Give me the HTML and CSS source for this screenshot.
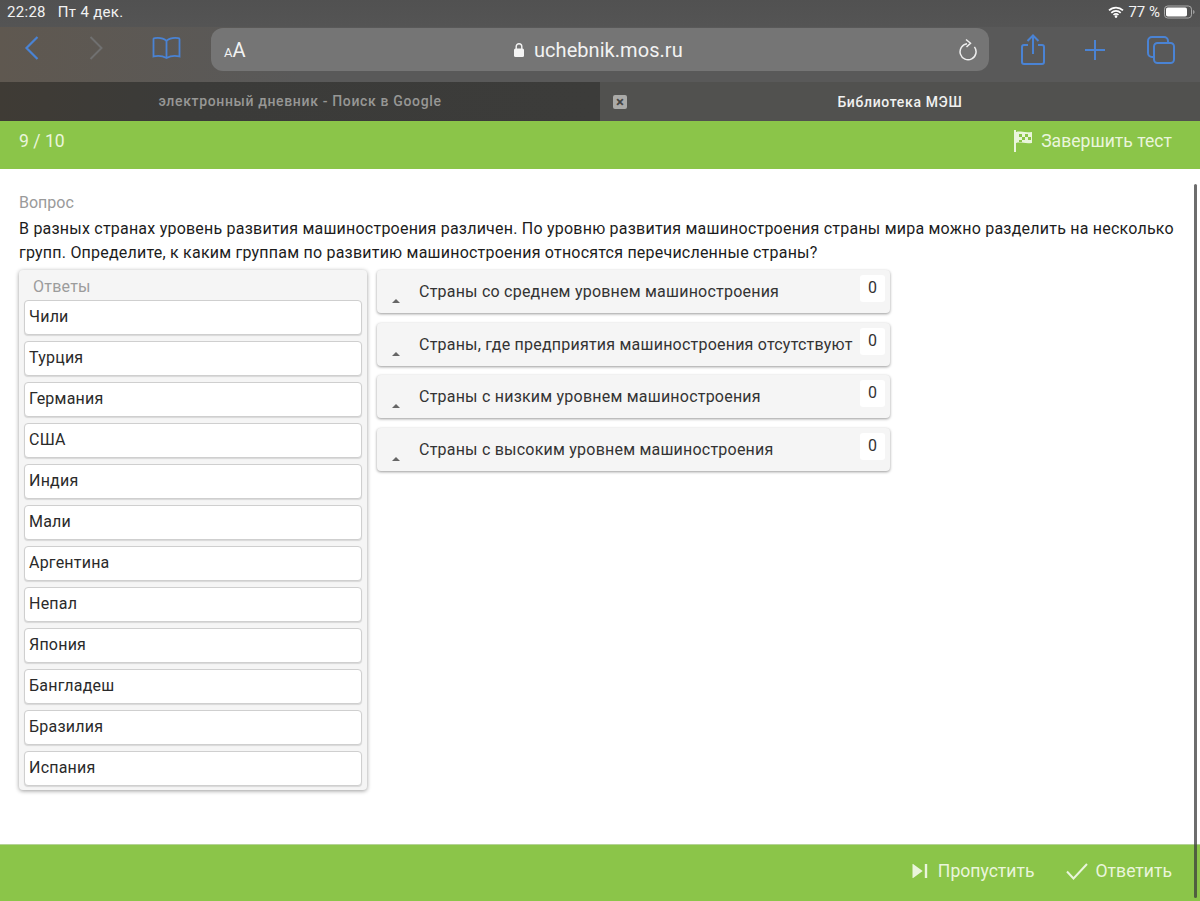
FILE: index.html
```html
<!DOCTYPE html>
<html lang="ru">
<head>
<meta charset="utf-8">
<title>Библиотека МЭШ</title>
<link rel="stylesheet" href="styles.css">
</head>
<body>
<div class="chrome">
  <div class="status">
    <div class="status-left"><span>22:28</span><span>Пт 4 дек.</span></div>
    <div class="status-right">
      <svg class="wifi" width="16" height="12" viewBox="0 0 16 12"><path d="M1 4.400a10 10 0 0 1 14 0M3.300 6.800a6.800 6.800 0 0 1 9.400 0M5.500 9a3.600 3.600 0 0 1 5 0" fill="none" stroke="#fff" stroke-width="1.700"/><circle cx="8" cy="10.600" r="1.300" fill="#fff"/></svg>
      <span>77 %</span>
      <svg width="32" height="14" viewBox="0 0 32 14"><rect x=".5" y="1" width="27" height="12" rx="3.200" fill="none" stroke="#aaa"/><rect x="2" y="2.500" width="21" height="9" rx="1.800" fill="#fff"/><path d="M29 5v4c1-.3 1.600-1 1.600-2S30 5.300 29 5z" fill="#999"/></svg>
    </div>
  </div>
  <div class="toolbar">
    <div class="nav-icons">
      <svg width="16" height="26" viewBox="0 0 16 26"><path d="M13.500 2 2.500 13l11 11" fill="none" stroke="#4a83d4" stroke-width="2.200"/></svg>
      <svg class="nav-forward" width="16" height="26" viewBox="0 0 16 26"><path d="M2.500 2l11 11-11 11" fill="none" stroke="#707070" stroke-width="2"/></svg>
      <svg class="nav-book" width="29" height="24" viewBox="0 0 28 24"><path d="M14 5C11 2.200 6 1.600 2 2.200a1 1 0 0 0-1 1V20.500c4-1 9-.7 13 1.500 4-2.200 9-2.500 13-1.500V3.200a1 1 0 0 0-1-1C22 1.600 17 2.200 14 5zM14 5v17" fill="none" stroke="#4a83d4" stroke-width="1.800"/></svg>
    </div>
    <div class="address">
      <div class="aa"><small>A</small>A</div>
      <div class="url">
        <svg width="12" height="16" viewBox="0 0 12 16"><rect x="1" y="6.500" width="10" height="8.500" rx="1.500" fill="#f4f4f4"/><path d="M3.200 7V4.500a2.800 2.800 0 0 1 5.600 0V7" fill="none" stroke="#f4f4f4" stroke-width="1.400"/></svg>
        <span>uchebnik.mos.ru</span>
      </div>
      <svg class="reload" width="20" height="24" viewBox="0 0 20 24"><path d="M12.700 5.400A8 8 0 1 1 5 7.500" fill="none" stroke="#eee" stroke-width="1.500" transform="rotate(38 10 14)"/><path d="M9 1.500l4.500 3.800L9.500 9" fill="none" stroke="#eee" stroke-width="1.500"/></svg>
    </div>
    <div class="action-icons">
      <svg width="24" height="32" viewBox="0 0 24 32"><path d="M7 11H3a2 2 0 0 0-2 2v15a2 2 0 0 0 2 2h18a2 2 0 0 0 2-2V13a2 2 0 0 0-2-2h-4M12 20V2M6.500 7 12 1.500 17.500 7" fill="none" stroke="#4a83d4" stroke-width="2"/></svg>
      <svg width="22" height="22" viewBox="0 0 22 22"><path d="M11 1v20M1 11h20" fill="none" stroke="#4a83d4" stroke-width="2"/></svg>
      <svg class="icon-tabs" width="28" height="28" viewBox="0 0 28 28"><rect x="7" y="7" width="20" height="20" rx="3.500" fill="none" stroke="#4a83d4" stroke-width="2"/><path d="M7 21H5a4 4 0 0 1-4-4V5a4 4 0 0 1 4-4h12a4 4 0 0 1 4 4v2" fill="none" stroke="#4a83d4" stroke-width="2"/></svg>
    </div>
  </div>
  <div class="tabs">
    <div class="tab tab-off">электронный дневник - Поиск в Google</div>
    <div class="tab tab-on">
      <span class="tab-close">×</span>
      Библиотека МЭШ
    </div>
  </div>
</div>

<header class="top-bar">
  <span>9 / 10</span>
  <a class="bar-action gap-flag">
    <svg width="18" height="22" viewBox="0 0 18 22"><path d="M1 0v22" stroke="#eaf5dc" stroke-width="2"/><path d="M2 2c5-1.500 6 1 16 0v11c-8 1-11-1.500-16 0z" fill="#eaf5dc"/><path d="M5 4h3v3h3v3H8V7H5zM11 4h3v3h-3zM14 7h3v3h-3zM5 10h3v2H5z" fill="#8bc549"/></svg>
    Завершить тест
  </a>
</header>

<main class="content">
  <div class="q-label">Вопрос</div>
  <p class="q-text">В разных странах уровень развития машиностроения различен. По уровню развития машиностроения страны мира можно разделить на несколько групп. Определите, к каким группам по развитию машиностроения относятся перечисленные страны?</p>
  <div class="columns">
    <section class="answers">
      <div class="answers-title">Ответы</div>
      <div class="answer">Чили</div>
      <div class="answer">Турция</div>
      <div class="answer">Германия</div>
      <div class="answer">США</div>
      <div class="answer">Индия</div>
      <div class="answer">Мали</div>
      <div class="answer">Аргентина</div>
      <div class="answer">Непал</div>
      <div class="answer">Япония</div>
      <div class="answer">Бангладеш</div>
      <div class="answer">Бразилия</div>
      <div class="answer">Испания</div>
    </section>
    <section class="groups">
      <div class="group"><i class="caret"></i><span class="group-name">Страны со среднем уровнем машиностроения</span><span class="count">0</span></div>
      <div class="group"><i class="caret"></i><span class="group-name">Страны, где предприятия машиностроения отсутствуют</span><span class="count">0</span></div>
      <div class="group"><i class="caret"></i><span class="group-name">Страны с низким уровнем машиностроения</span><span class="count">0</span></div>
      <div class="group"><i class="caret"></i><span class="group-name">Страны с высоким уровнем машиностроения</span><span class="count">0</span></div>
    </section>
  </div>
</main>

<footer class="bottom-bar">
  <a class="bar-action gap-skip">
    <svg width="16" height="14" viewBox="0 0 16 14"><path d="M1.500 1.500 9 7l-7.500 5.500z" fill="#eaf5dc" stroke="#eaf5dc" stroke-width="2"/><path d="M14 0v14" stroke="#eaf5dc" stroke-width="2.400"/></svg>
    Пропустить
  </a>
  <a class="bar-action">
    <svg width="22" height="17" viewBox="0 0 22 17"><path d="M1 8.500 7.500 15.500 21 1" fill="none" stroke="#eaf5dc" stroke-width="2"/></svg>
    Ответить
  </a>
</footer>
<div class="scrollbar"></div>
</body>
</html>
```

FILE: styles.css
```css
* { box-sizing: border-box; }
html, body { margin: 0; height: 100%; }
body {
  display: flex;
  flex-direction: column;
  height: 901px;
  overflow: hidden;
  background: #fff;
  color: #222;
  font-family: Roboto, "Liberation Sans", sans-serif;
  font-size: 16px;
  letter-spacing: .22px;
}
.chrome {
  background: linear-gradient(180deg, #515151 0%, #5a5a5a 60%, #565654 100%);
  color: #f2f2f2;
  letter-spacing: 0;
}
.status {
  height: 27px;
  padding: 0 4px 3px 7px;
  display: flex;
  justify-content: space-between;
  align-items: center;
  font-size: 15px;
}
.status-left { display: flex; gap: 12px; letter-spacing: .3px; }
.status-right { display: flex; align-items: center; gap: 4px; }
.toolbar {
  height: 55px;
  display: flex;
  align-items: flex-start;
  padding-left: 24px;
  background: linear-gradient(90deg, #5f5850 0%, #595959 25%, #595959 100%);
}
.nav-icons {
  width: 187px;
  flex: none;
  padding-top: 8px;
  display: flex;
  align-items: center;
}
.nav-forward { margin-left: 48px; }
.nav-book { margin-left: 48px; }
.address {
  width: 778px;
  height: 43px;
  margin-top: 1px;
  flex: none;
  border-radius: 12px;
  background: #757575;
  position: relative;
  display: flex;
  align-items: center;
  justify-content: space-between;
  padding: 0 10px 0 13px;
}
.reload { margin-right: 2px; }
.aa { font-size: 20px; color: #f2f2f2; }
.aa small { font-size: 13px; }
.url {
  position: absolute;
  left: 302px;
  top: 0;
  height: 43px;
  display: flex;
  align-items: center;
  gap: 9px;
  font-size: 20px;
  letter-spacing: .05px;
  color: #f2f2f2;
}
.action-icons {
  flex: 1;
  display: flex;
  align-items: center;
  height: 45px;
  padding-left: 32px;
  gap: 39px;
}
.icon-tabs { margin-left: 2px; }
.tabs { height: 39px; display: flex; font-size: 14px; font-weight: 500; letter-spacing: .65px; }
.tab { width: 600px; display: flex; align-items: center; justify-content: center; }
.tab-off { background: linear-gradient(90deg, #3f3b35, #3b3b39 30%, #3c3c3a); color: #979795; padding-bottom: 1px; }
.tab-on { background: #51514f; color: #f1f1f1; position: relative; }
.tab-close {
  position: absolute;
  left: 13px;
  top: 13px;
  width: 14px;
  height: 14px;
  border-radius: 2px;
  background: #aaaaa8;
  color: #444;
  font-size: 15px;
  font-weight: 700;
  line-height: 14px;
  text-align: center;
  letter-spacing: 0;
}
.top-bar, .bottom-bar {
  background: #8bc549;
  color: #eaf5dc;
  display: flex;
  align-items: center;
  flex: none;
  padding: 0 28px 0 19px;
  font-size: 17.6px;
  letter-spacing: 0;
}
.top-bar { height: 48px; justify-content: space-between; padding-bottom: 8px; }
.bar-action { display: flex; align-items: center; gap: 8px; }
.gap-flag { gap: 9px; }
.gap-skip { gap: 10px; }
.content { flex: 1; padding: 25px 19px 0; min-height: 0; }
.q-label { color: #9a9a9a; font-size: 16px; line-height: 18px; letter-spacing: 0; }
.q-text { margin: 5px 0 0; font-size: 16px; line-height: 24px; color: #1c1c1c; }
.columns { display: flex; align-items: flex-start; gap: 10px; margin-top: 5px; }
.answers {
  width: 348px;
  flex: none;
  padding: 9px 5px 4px;
  border-radius: 4px;
  background: #f5f5f5;
  box-shadow: 0 1px 4px rgba(0,0,0,.4);
  display: flex;
  flex-direction: column;
  gap: 6px;
}
.answers-title { color: #9c9c9c; font-size: 16px; line-height: 15px; padding-left: 9px; }
.answer {
  height: 35px;
  padding: 0 4px 3px;
  display: flex;
  align-items: center;
  background: #fff;
  border: 1px solid #cfcfcf;
  border-radius: 4px;
  box-shadow: 0 1px 1px rgba(0,0,0,.12);
  color: #2a2a2a;
}
.groups { width: 513px; flex: none; display: flex; flex-direction: column; gap: 9.67px; }
.group {
  height: 43px;
  background: #f5f5f5;
  border-radius: 4px;
  box-shadow: 0 1px 3px rgba(0,0,0,.4);
  display: flex;
  align-items: center;
  position: relative;
  padding-left: 42px;
  color: #333;
}
.caret {
  position: absolute;
  left: 15px;
  top: 29px;
  border-left: 4px solid transparent;
  border-right: 4px solid transparent;
  border-bottom: 4px solid #666;
}
.count {
  position: absolute;
  right: 5px;
  top: 5px;
  width: 25px;
  height: 27px;
  border-radius: 3px;
  background: #fff;
  text-align: center;
  line-height: 26px;
  letter-spacing: 0;
}
.bottom-bar { height: 57px; justify-content: flex-end; gap: 31px; border-top: 1px solid #b5d396; padding-bottom: 4px; }
.scrollbar {
  position: absolute;
  left: 1194px;
  top: 184px;
  width: 3px;
  height: 714px;
  border-radius: 2px;
  background: rgba(60,60,60,.75);
}
```
